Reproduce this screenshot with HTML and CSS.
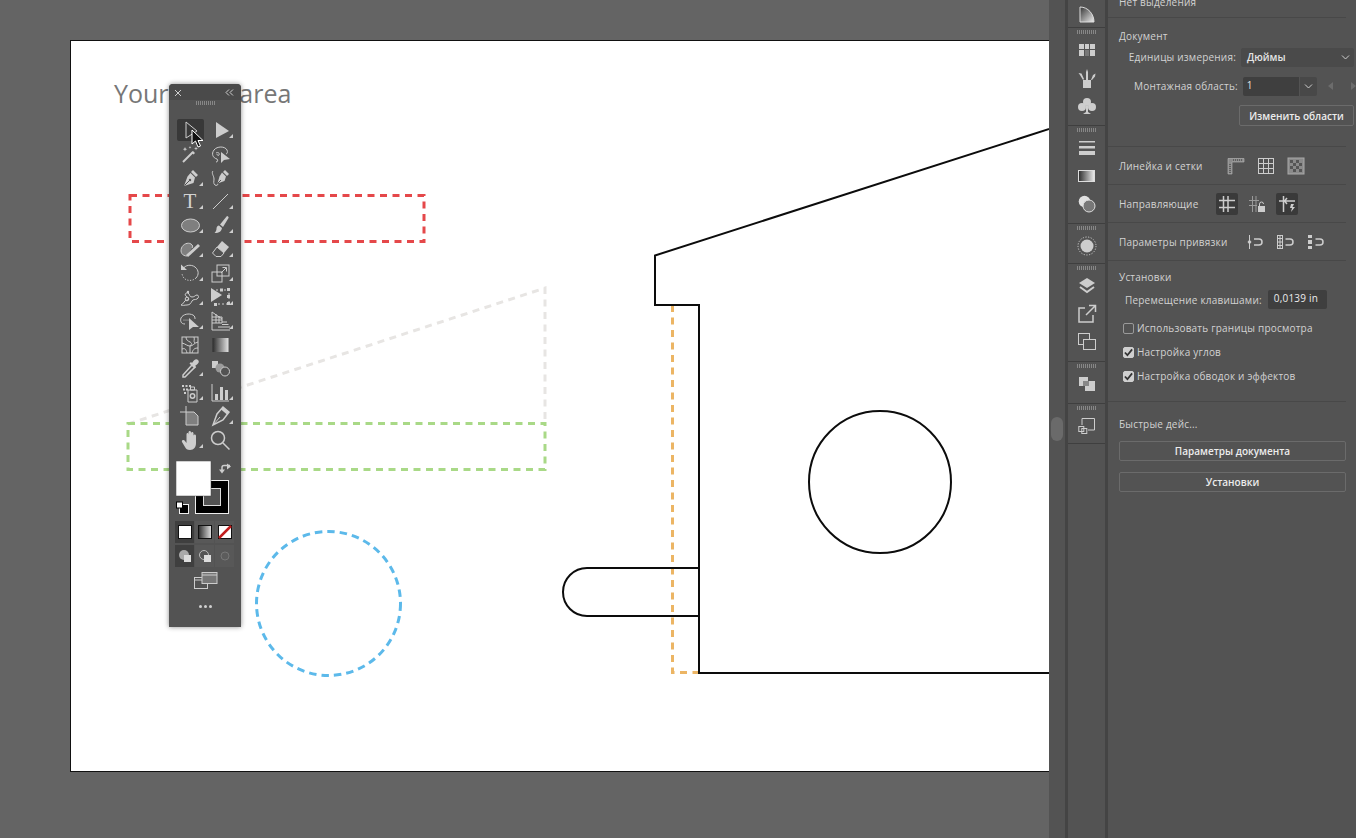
FILE: index.html
```html
<!DOCTYPE html>
<html lang="ru">
<head>
<meta charset="utf-8">
<title>Документ</title>
<link rel="stylesheet" href="styles.css">
</head>
<body>
<div class="app">
  <main class="canvas">
    <svg class="stage" viewBox="0 0 1049 838" width="1049" height="838">
      <rect class="artboard" x="70.5" y="40.5" width="1000" height="731"/>
      <text class="ab-title" x="114" y="103">Your work area</text>
      <rect class="d d-red" x="130" y="195.500" width="294" height="46"/>
      <path class="d d-grey" d="M128 424 L545 288 V424"/>
      <rect class="d d-green" x="128" y="423.500" width="417" height="46"/>
      <circle class="d d-blue" cx="328.500" cy="603.500" r="72"/>
      <path class="d d-orange" d="M672.500 305 V672.500 H698"/>
      <path class="ink" d="M1060 125.500 L655 255.500 V305 H699 V673 H1060"/>
      <circle class="ink" cx="880" cy="482" r="71"/>
      <path class="ink" d="M699 568 H587 A24 24 0 0 0 587 616 H699"/>
    </svg>

    <aside class="toolbar">
      <div class="tb-head">
        <svg width="8" height="8" viewBox="0 0 8 8"><path class="s" d="M1 1 7 7M7 1 1 7"/></svg>
        <svg width="9" height="7" viewBox="0 0 9 7"><path class="s" d="M4 .5 1 3.500 4 6.500M8 .5 5 3.500 8 6.500"/></svg>
      </div>
      <div class="grip tb-grip"></div>
      <div class="tools">
        <div class="tool active"><svg viewBox="0 0 24 24"><path class="s" d="M8 4 V20 L19 13 Z"/></svg></div>
        <div class="tool more"><svg viewBox="0 0 24 24"><path class="f" d="M8 4 V20 L21 13 Z"/></svg></div>
        <div class="tool"><svg viewBox="0 0 24 24"><path class="s w2" d="M5 20 15 10"/><path class="f" d="M15 9l2 2-1.500 1.500-2-2zM7 5l.6 1.600 1.600.6-1.600.6L7 9.400l-.6-1.600L4.800 7.200l1.600-.6zM18 4.500l.5 1.500 1.500.5-1.500.5-.5 1.500-.5-1.500-1.500-.5 1.500-.5zM12 4l.4 1 1 .4-1 .4-.4 1-.4-1-1-.4 1-.4z"/></svg></div>
        <div class="tool"><svg viewBox="0 0 24 24"><path class="s" d="M9 17C5 16 3 12 6 8c3-4 11-4 13 0 1 2 0 4-1 4"/><path class="s" d="M8 11c2-1 4 0 3 2-1 1-2 0-2-1M9 17c1 1 1 3-1 3"/><path class="f" d="M13 10 V21 L16 18 L22 17 Z"/></svg></div>
        <div class="tool more"><svg viewBox="0 0 24 24"><path class="f" d="M15 4l5 5-2 2-5-5zM12.500 7l4.500 4.500-1.500 5.500L6 20l3.500-9.500z"/><path class="cut" d="M6.500 19.500l5-5"/><circle class="cutf" cx="12" cy="14" r="1.200"/></svg></div>
        <div class="tool"><svg viewBox="0 0 24 24"><path class="f" d="M17 4l4 4-2 2-4-4zM14 6.500l4 4-1.500 4.500-7 2.500 2-7z"/><path class="cut" d="M10 17l3-3"/><path class="s" d="M5 5c-2 2 1 5 1 8s-1 4 1 6c1 1 3 0 3-1"/></svg></div>
        <div class="tool more"><span class="type-t">T</span></div>
        <div class="tool more"><svg viewBox="0 0 24 24"><path class="s" d="M5 20 20 5"/></svg></div>
        <div class="tool more"><svg viewBox="0 0 24 24"><ellipse class="sf" cx="12.500" cy="12.500" rx="9" ry="6.500"/></svg></div>
        <div class="tool more"><svg viewBox="0 0 24 24"><path class="f" d="M19 3c1 0 2 1 1.500 2L15 14l-3-2.500zM11 12.500l3 2.500c-.5 3-2.500 5-7.500 5 1.500-1.500 2-3 2-4.500 0-1.500 1-3 2.500-3z"/></svg></div>
        <div class="tool more"><svg viewBox="0 0 24 24"><path class="sf" d="M9 19C4 19 2 15 3.500 11 5 7 10 5 13 7c2 1.200 2 3 1 4"/><path class="s w3" d="M9 19 21 8"/></svg></div>
        <div class="tool more"><svg viewBox="0 0 24 24"><path class="f" d="M14 4l7 6-5 6-7-6z"/><path class="s" d="M9 10l7 6-3 3.500H8L4.500 16z"/></svg></div>
        <div class="tool more"><svg viewBox="0 0 24 24"><path class="s" d="M5 8C7 4 13 3 17 6c4 3 4 8 1 11"/><path class="f" d="M3 3.500 9 9H3z"/><path class="s dots" d="M18 17c-3 3-8 3-11 1-2-1.500-3-4-3-6"/></svg></div>
        <div class="tool more"><svg viewBox="0 0 24 24"><rect class="s" x="4" y="11" width="10" height="10"/><rect class="s" x="9" y="4" width="12" height="11"/><path class="s" d="M13 12l5-5M14.500 6.500H18.500V10.500"/></svg></div>
        <div class="tool more"><svg viewBox="0 0 24 24"><path class="s" d="M3 20c3-1 3-5 6-5s1-3-1-4 0-4 2-3 1 4 4 4 3-2 5-2 2 3 0 4-4 0-5 2-2 4-5 4-4 1-6 0"/><circle class="f" cx="10" cy="7" r="1.200"/><circle class="s" cx="9" cy="14" r="1.800"/></svg></div>
        <div class="tool more"><svg viewBox="0 0 24 24"><path class="f" d="M3 3 V17 L14 10 Z"/><path class="s dash" d="M8 5H21V19H7"/><path class="f" d="M6 18h3v3H6zM19 3h3v3h-3zM19 17h3v3h-3zM19 10h3v3h-3zM12 3.500h3v3h-3z"/></svg></div>
        <div class="tool more"><svg viewBox="0 0 24 24"><path class="s" d="M7 15C3 15 2 12 3 9c2-4 8-5 12-3 2 1 2 3 2 4"/><path class="f" d="M11 9V21L15 18H21Z"/><circle class="f" cx="6" cy="11" r=".6"/><circle class="f" cx="8" cy="11" r=".6"/><circle class="f" cx="10" cy="11" r=".6"/></svg></div>
        <div class="tool more"><svg viewBox="0 0 24 24"><path class="s" d="M4 3V21H22M4 3 14 10M4 8h10v6H4M8 5v9M11 7v7M4 11h10M14 13h5M14 15.500h6.500M10 18h12"/></svg></div>
        <div class="tool"><svg viewBox="0 0 24 24"><rect class="s" x="4" y="4" width="16" height="16"/><path class="s" d="M4 10c4 1 5 3 8 3s4-3 8-4M12 13v7M8 4c0 3 2 4 4 5s2 2 0 4M16 4c1 3-1 4 1 6M4 16c3-1 4 0 5 4M20 15c-3 0-5 1-6 5"/></svg></div>
        <div class="tool"><svg viewBox="0 0 24 24"><defs><linearGradient id="gr"><stop offset="0" stop-color="#2c2c2c"/><stop offset="1" stop-color="#e2e2e2"/></linearGradient></defs><rect x="4.500" y="5" width="16" height="14" fill="url(#gr)"/></svg></div>
        <div class="tool more"><svg viewBox="0 0 24 24"><path class="s w15" d="M14 9 5 19v2h2l10-10z"/><path class="f" d="M14 7c2-3 4-5 6-3s0 4-3 6l1 1-1.500 1.500-5-5L13 6z"/></svg></div>
        <div class="tool"><svg viewBox="0 0 24 24"><path class="f" d="M4 5h6v7H4z"/><circle fill="#9b9b9b" cx="12" cy="12" r="4.500"/><circle class="s sbg" cx="17" cy="15.500" r="4.500"/></svg></div>
        <div class="tool more"><svg viewBox="0 0 24 24"><path class="s" d="M10 10h9v12h-9zM12.500 7h4v3h-4z"/><circle class="s w15" cx="14.500" cy="16" r="2.200"/><path class="f" d="M4 5h2v2H4zM7.500 5h2v2h-2zM11 5h2v2h-2zM5 8.500h2v2H5zM8 8.500h2v2H8zM6 12h2v2H6z"/></svg></div>
        <div class="tool more"><svg viewBox="0 0 24 24"><path class="s" d="M4 4V21H21"/><path class="f" d="M7 14h3v6H7zM12 7h3v13h-3zM17 10h3v10h-3z"/></svg></div>
        <div class="tool"><svg viewBox="0 0 24 24"><path class="s" d="M8 2v6M2 8h6"/><path class="sf" d="M8 8h8l4 4v9H8z"/></svg></div>
        <div class="tool more"><svg viewBox="0 0 24 24"><path class="s w15" d="M5 21 9 10l6-7 6 5-6 8z"/><path class="f" d="M15 3l6 5-2 2.500-6-5z"/><path class="s" d="M5 21 12 13"/></svg></div>
        <div class="tool more"><svg viewBox="0 0 24 24"><path class="f" d="M5.500 12c1 0 2 1.500 3 3V6.500c0-2 2-2 2 0V11V4.500c0-2 2.500-2 2.500 0V11V5.500c0-2 2.500-2 2.500 0V12V8c0-2 2.500-2 2.500 0v7c0 4-2 7-6 7-3 0-4-1-5-3l-3-5c-.6-1.500.5-2 1.500-2z"/></svg></div>
        <div class="tool"><svg viewBox="0 0 24 24"><circle class="s w15" cx="10" cy="10" r="6.500"/><path class="s w15" d="M15 15l6.500 6.500"/></svg></div>
      </div>

      <div class="fillstroke">
        <svg width="60" height="60" viewBox="0 0 60 60">
          <rect x="19.500" y="19.500" width="33" height="33" fill="#000" stroke="#eee"/>
          <rect x="27.500" y="27.500" width="17" height="17" fill="#535353" stroke="#ddd"/>
          <rect x="0" y="0" width="35" height="35" fill="#fff" stroke="#444" stroke-width=".5"/>
          <path class="s w15" d="M46 11V6.500a2 2 0 0 1 2-2h6"/>
          <path class="f" d="M51 1.500l4 3-4 3zM43 7.500h6l-3 4z" transform="translate(0 1)"/>
          <rect x="3.500" y="43.500" width="9" height="9" fill="#000" stroke="#eee"/>
          <rect x=".5" y="41" width="6" height="6" fill="#fff" stroke="#000"/>
        </svg>
      </div>
      <div class="modes">
        <div class="mode active"><svg width="14" height="14" viewBox="0 0 14 14"><rect x=".5" y=".5" width="13" height="13" fill="#fff" stroke="#111"/></svg></div>
        <div class="mode"><svg width="14" height="14" viewBox="0 0 14 14"><rect x=".5" y=".5" width="13" height="13" fill="url(#gr)" stroke="#111"/></svg></div>
        <div class="mode"><svg width="14" height="14" viewBox="0 0 14 14"><rect x=".5" y=".5" width="13" height="13" fill="#fff" stroke="#111"/><path d="M1 13 13 1" stroke="#c21d1d" stroke-width="2.500"/></svg></div>
      </div>
      <div class="modes">
        <div class="mode active"><svg width="14" height="14" viewBox="0 0 14 14"><circle cx="6" cy="6" r="5" fill="#aaa"/><rect x="6" y="6" width="7" height="7" fill="#ddd"/></svg></div>
        <div class="mode"><svg width="14" height="14" viewBox="0 0 14 14"><circle cx="6" cy="6" r="4.500" fill="#555" stroke="#bbb"/><rect x="6" y="6" width="7" height="7" fill="#ddd"/></svg></div>
        <div class="mode"><svg width="14" height="14" viewBox="0 0 14 14"><circle cx="7" cy="7" r="4" fill="#5c5c5c" stroke="#777"/></svg></div>
      </div>
      <div class="screen"><svg width="24" height="17" viewBox="0 0 24 17"><rect class="s" x=".5" y="5.500" width="13" height="11"/><rect x="8" y=".5" width="15" height="11" fill="#777" stroke="#ccc"/><path class="s" d="M8 3H23M1 8H8"/></svg></div>
      <div class="dots"><span></span><span></span><span></span></div>
    </aside>
    <svg class="cursor" width="14" height="20" viewBox="0 0 14 20"><path d="M1 1V15L4.500 12 7 18l2.500-1L7 11.500h5z" fill="#111" stroke="#fff"/></svg>
  </main>

  <div class="gutter"><div class="handle"></div></div>

  <nav class="dock">
    <section class="dock-sec first">
      <div class="dock-i"><svg width="18" height="18" viewBox="0 0 18 18"><defs><linearGradient id="gd" x1="0" y1="0" x2="1" y2="1"><stop offset="0" stop-color="#333"/><stop offset="1" stop-color="#eee"/></linearGradient></defs><path d="M2 1c8 0 14 7 14 15H2z" fill="url(#gd)" stroke="#ddd"/></svg></div>
    </section>
    <section class="dock-sec pb5">
      <div class="grip"></div>
      <div class="dock-i"><svg width="18" height="14" viewBox="0 0 18 14"><path class="f" d="M1 1h5v5H1zM7 1h4v5H7zM12 1h5v5h-5zM1 7h5v6H1zM12 7h5v6h-5z"/><rect x="7" y="7" width="4" height="6" fill="#777"/></svg></div>
      <div class="dock-i"><svg width="18" height="20" viewBox="0 0 18 20"><path class="f" d="M5 12h8v8H5zM8 12V4l1-3 1 3v8zM5 12 2 7 .5 5l3 .5L6 11zM13 12l2-5 2.500-1.500-.5 3L14 12z"/></svg></div>
      <div class="dock-i"><svg width="18" height="18" viewBox="0 0 18 18"><circle class="f" cx="9" cy="5" r="4"/><circle class="f" cx="4" cy="10" r="4"/><circle class="f" cx="14" cy="10" r="4"/><path class="f" d="M8 9h2v6l3 2H5l3-2z"/></svg></div>
    </section>
    <section class="dock-sec pb5">
      <div class="grip"></div>
      <div class="dock-i"><svg width="18" height="14" viewBox="0 0 18 14"><path class="f" d="M1 0h16v1.500H1zM1 5h16v2.500H1zM1 10h16v4H1z"/></svg></div>
      <div class="dock-i"><svg width="18" height="14" viewBox="0 0 18 14"><defs><linearGradient id="gh"><stop offset="0" stop-color="#2c2c2c"/><stop offset="1" stop-color="#eee"/></linearGradient></defs><rect x=".5" y="1.500" width="16" height="11" fill="url(#gh)" stroke="#ddd"/></svg></div>
      <div class="dock-i"><svg width="18" height="18" viewBox="0 0 18 18"><circle cx="6.500" cy="6.500" r="5.800" fill="#e0e0e0"/><circle cx="11" cy="11" r="6" fill="#777" stroke="#ddd"/></svg></div>
    </section>
    <section class="dock-sec">
      <div class="grip"></div>
      <div class="dock-i"><svg width="20" height="20" viewBox="0 0 20 20"><circle class="f" cx="10" cy="10" r="6.500"/><circle class="s dots" cx="10" cy="10" r="9"/></svg></div>
    </section>
    <section class="dock-sec pb5">
      <div class="grip"></div>
      <div class="dock-i"><svg width="18" height="18" viewBox="0 0 18 18"><path class="f" d="M9 1l8 5-8 5-8-5z"/><path class="s w2" d="M2 10l7 5 7-5"/></svg></div>
      <div class="dock-i"><svg width="20" height="20" viewBox="0 0 20 20"><path class="s w15" d="M8 4H2V18H16V11"/><path class="s w15" d="M9 11 18 2M12 1.500H18.500V8"/></svg></div>
      <div class="dock-i"><svg width="20" height="20" viewBox="0 0 20 20"><rect class="s" x="1.500" y="1.500" width="11" height="11"/><rect class="s sbg" x="6.500" y="7.500" width="12" height="10"/></svg></div>
    </section>
    <section class="dock-sec pb5">
      <div class="grip"></div>
      <div class="dock-i"><svg width="16" height="16" viewBox="0 0 16 16"><path class="f" d="M0 1h9v4H4v5H0z"/><rect x="4" y="5" width="6" height="5" fill="#888"/><path class="f" d="M10 5h6v10H6v-5h4z"/></svg></div>
    </section>
    <section class="dock-sec">
      <div class="grip"></div>
      <div class="dock-i"><svg width="18" height="18" viewBox="0 0 18 18"><path class="s" d="M4 8V1.500H16.500V13H10"/><rect class="s" x=".8" y="9.500" width="5" height="5"/><rect class="s" x="3.800" y="11.500" width="5" height="5"/></svg></div>
    </section>
  </nav>

  <div class="panel">
    <section class="sec sec-top"><h2 class="label">Нет выделения</h2></section>

    <section class="sec sec-doc">
      <h2 class="label">Документ</h2>
      <div class="row row-units">
        <span class="label">Единицы измерения:</span>
        <div class="select"><strong>Дюймы</strong><svg class="chev" width="9" height="5" viewBox="0 0 9 5"><path class="s" d="M1 .5 4.500 4 8 .5"/></svg></div>
      </div>
      <div class="row row-board">
        <span class="label">Монтажная область:</span>
        <div class="combo"><span class="combo-v">1</span><span class="combo-b"><svg class="chev" width="9" height="5" viewBox="0 0 9 5"><path class="s" d="M1 .5 4.500 4 8 .5"/></svg></span></div>
        <svg class="pager" width="30" height="8" viewBox="0 0 30 8"><path d="M6 0V8L1 4zM24 0V8L29 4z" fill="#6c6c6c"/></svg>
      </div>
      <button class="btn btn-edit">Изменить области</button>
    </section>

    <section class="sec sec-line">
      <h2 class="label">Линейка и сетки</h2>
      <div class="icons icons-a">
        <svg width="18" height="18" viewBox="0 0 18 18"><path d="M1 1.500H17V5H5V17H1z" fill="#8b8b8b" stroke="#bbb" stroke-width=".6"/><path d="M6 3h10M3 7v9" stroke="#333" stroke-dasharray="1 1"/></svg>
        <svg width="18" height="18" viewBox="0 0 18 18"><rect class="s" x="1.500" y="1.500" width="15" height="15"/><path class="s" d="M6.500 1.500V16.500M11.500 1.500V16.500M1.500 6.500H16.500M1.500 11.500H16.500"/></svg>
        <svg width="18" height="18" viewBox="0 0 18 18"><rect x="1" y="1" width="16" height="16" fill="#8a8a8a" stroke="#aaa"/><path d="M3 3h3v3H3zM9 3h3v3H9zM6 6h3v3H6zM12 6h3v3h-3zM3 9h3v3H3zM9 9h3v3H9zM6 12h3v3H6zM12 12h3v3h-3z" fill="#555"/></svg>
      </div>
    </section>

    <section class="sec sec-line">
      <h2 class="label">Направляющие</h2>
      <div class="icons icons-b">
        <div class="ib on"><svg width="18" height="18" viewBox="0 0 18 18"><path class="s w15" d="M1 5.500H17M1 12.500H17M5.500 1V17M10 1V17"/></svg></div>
        <div class="ib"><svg width="18" height="18" viewBox="0 0 18 18"><path class="s dim" d="M1 5.500H11M1 10.500H9M4.500 1V17M8 1V17"/><path class="f" d="M10 11h7v6h-7z"/><path class="s" d="M11.500 11V9a2 2 0 0 1 4 0"/></svg></div>
        <div class="ib on"><svg width="18" height="18" viewBox="0 0 18 18"><path class="s w15" d="M5.500 1V17M1 6H5M7 6H17M9 3 6.500 6 9 9"/><path class="f" d="M13 9h3l-1.500 3H17l-4 5 1-4h-2z"/></svg></div>
      </div>
    </section>

    <section class="sec sec-line">
      <h2 class="label">Параметры привязки</h2>
      <div class="icons icons-c">
        <svg width="18" height="14" viewBox="0 0 18 14"><path class="s" d="M3.500 0V14"/><path class="f" d="M3.500 4.500 5.500 7 3.500 9.500 1.500 7z"/><path class="s w15" d="M8 4H13a3 3 0 0 1 0 6H8"/></svg>
        <svg width="18" height="14" viewBox="0 0 18 14"><rect class="s" x="1.500" y=".5" width="5" height="13"/><path class="s" d="M1.500 3.500h5M1.500 7h5M1.500 10.500h5M4 .5v13"/><path class="s w15" d="M9.500 4H14a3 3 0 0 1 0 6H9.500"/></svg>
        <svg width="18" height="14" viewBox="0 0 18 14"><path class="f" d="M2 0h4v3H2zM2 5h4v4H2zM2 11h4v3H2z"/><path class="s w15" d="M9.500 4H14a3 3 0 0 1 0 6H9.500"/></svg>
      </div>
    </section>

    <section class="sec sec-set">
      <h2 class="label">Установки</h2>
      <div class="row row-nudge">
        <span class="label">Перемещение клавишами:</span>
        <span class="field">0,0139 in</span>
      </div>
      <label class="check"><span class="box"></span><span class="label">Использовать границы просмотра</span></label>
      <label class="check"><span class="box on"><svg width="10" height="9" viewBox="0 0 10 9"><path d="M1 4.500 3.800 7.500 9 1" fill="none" stroke="#333" stroke-width="2"/></svg></span><span class="label">Настройка углов</span></label>
      <label class="check"><span class="box on"><svg width="10" height="9" viewBox="0 0 10 9"><path d="M1 4.500 3.800 7.500 9 1" fill="none" stroke="#333" stroke-width="2"/></svg></span><span class="label">Настройка обводок и эффектов</span></label>
    </section>

    <section class="sec sec-quick">
      <h2 class="label">Быстрые дейс...</h2>
      <button class="btn btn-wide">Параметры документа</button>
      <button class="btn btn-wide">Установки</button>
    </section>
  </div>
</div>
</body>
</html>
```
FILE: styles.css
```css
* { box-sizing: border-box; }
html, body { margin: 0; height: 100%; overflow: hidden; }
body { background: #535353; font-family: "Open Sans", "Noto Sans", sans-serif; font-size: 10px; color: #d6d6d6; }
svg { display: block; }

.app { display: flex; width: 1356px; height: 838px; overflow: hidden; }

/* generic svg paint */
.s { fill: none; stroke: #cdcdcd; stroke-width: 1; }
.f { fill: #cdcdcd; }
.sf { fill: #7f7f7f; stroke: #cdcdcd; stroke-width: 1; }
.sbg { fill: #535353; }
.w15 { stroke-width: 1.500; }
.w2 { stroke-width: 2; }
.w3 { stroke-width: 3; }
.dash { stroke-dasharray: 2 2; }
.s.dots { stroke-dasharray: 1.200 1.500; }
.dim { stroke: #9a9a9a; }
.cut { fill: none; stroke: #535353; stroke-width: 1; }
.cutf { fill: #535353; }

/* canvas */
.canvas { position: relative; width: 1049px; flex: none; height: 838px; background: #646464; overflow: hidden; }
.stage { position: absolute; left: 0; top: 0; }
.artboard { fill: #fff; stroke: #111; stroke-width: 1; }
.ab-title { font-family: "Open Sans", sans-serif; font-size: 25px; fill: #777; }
.d { fill: none; stroke-width: 3; stroke-dasharray: 7 5.500; }
.d-red { stroke: #e5484a; }
.d-grey { stroke: #e7e5e3; }
.d-green { stroke: #a9d987; }
.d-blue { stroke: #5cb9ea; stroke-dasharray: 7.500 5; }
.d-orange { stroke: #ecb564; }
.ink { fill: none; stroke: #0c0c0c; stroke-width: 2; }

/* floating tools */
.toolbar { position: absolute; left: 169px; top: 84px; width: 72px; height: 543px; background: #535353; border-radius: 4px 4px 0 0; box-shadow: 0 0 5px rgba(0,0,0,.45); }
.tb-head { display: flex; justify-content: space-between; align-items: center; height: 16px; padding: 1px 7px 0 5px; background: #4a4a4a; border-radius: 4px 4px 0 0; }
.grip { height: 4px; width: 19px; background: repeating-linear-gradient(90deg, #878787 0 1px, transparent 1px 2px); }
.tb-grip { margin: 1px 0 0 27px; }
.tools { display: grid; grid-template-columns: 30px 30px; grid-auto-rows: 23.850px; margin: 13px 0 0 6px; }
.tool { position: relative; display: flex; align-items: center; justify-content: center; }
.tool svg { width: 24px; height: 24px; }
.tool.active::before { content: ""; position: absolute; left: 2px; top: 1px; width: 27px; height: 22px; background: #383838; border-radius: 2px; }
.tool.active svg { position: relative; }
.tool.more::after { content: ""; position: absolute; right: 2px; bottom: 4px; border: 2px solid transparent; border-right-color: #cdcdcd; border-bottom-color: #cdcdcd; }
.type-t { font-family: "Liberation Serif", serif; font-size: 21px; line-height: 24px; color: #d2d2d2; }
.fillstroke { margin: 9px 0 0 7px; height: 60px; }
.modes { display: flex; gap: 1px; margin: 0 0 2px 6px; width: 60px; }
.fillstroke + .modes { margin-top: 0; }
.mode { display: flex; align-items: center; justify-content: center; width: 19px; height: 22px; background: #585858; }
.mode.active { background: #3f3f3f; }
.modes + .modes { margin-top: 2px; }
.screen { display: flex; justify-content: center; margin: 5px 0 0 1px; }
.dots { display: flex; justify-content: center; gap: 2px; margin: 16px 0 0 0; }
div.dots span { width: 3px; height: 3px; border-radius: 50%; background: #d0d0d0; }
.cursor { position: absolute; left: 191px; top: 129px; }

/* gutter + dock */
.gutter { position: relative; width: 16px; flex: none; background: #535353; }
.handle { position: absolute; left: 2px; top: 417px; width: 12px; height: 24px; border-radius: 6px; background: #6a6a6a; }
.dock { width: 43px; flex: none; background: #535353; border-left: 3px solid #444; border-right: 3px solid #444; }
.dock-sec { padding: 8px 0 3px; border-bottom: 1px solid #3f3f3f; position: relative; }
.dock-sec.pb5 { padding-bottom: 5px; }
.dock-sec.first { height: 28px; padding: 0; display: flex; align-items: flex-end; justify-content: center; overflow: hidden; }
.dock-sec .grip { position: absolute; left: 9px; top: 0; margin-top: 2px; }
.dock-i { height: 28px; display: flex; align-items: center; justify-content: center; }
.dock-sec.first .dock-i { margin-bottom: 3px; height: 18px; }

/* panel */
.panel { flex: 1; min-width: 0; background: #535353; overflow: hidden; }
.label { margin: 0; font-size: 10px; font-weight: 400; color: #d2d2d2; line-height: 14px; letter-spacing: .2px; white-space: nowrap; }
.sec { width: 238px; border-bottom: 1px solid #484848; padding-left: 11px; }
.sec-top { height: 18px; padding-top: 0; display: flex; align-items: flex-end; padding-bottom: 8px; overflow: visible; }
.sec-doc { height: 129px; padding-top: 11px; position: relative; }
.row { display: flex; align-items: center; }
.row-units { margin-top: 4px; justify-content: flex-end; width: 235px; margin-left: 0; gap: 5px; height: 20px; }
.row-board { margin-top: 9px; justify-content: flex-start; gap: 5px; height: 20px; padding-left: 15px; width: 250px; }
.select { width: 113px; height: 19px; flex: none; background: #4a4a4a; border-radius: 2px; display: flex; align-items: center; justify-content: space-between; padding: 0 4px 0 6px; }
.select strong { font-weight: 600; font-size: 10px; color: #e4e4e4; }
.combo { display: flex; width: 74px; height: 19px; flex: none; }
.combo-v { flex: 1; background: #3f3f3f; color: #e4e4e4; padding-left: 4px; line-height: 16px; font-size: 10px; border-radius: 2px 0 0 2px; }
.combo-b { width: 17px; background: #484848; display: flex; align-items: center; justify-content: center; margin-left: 1px; border-radius: 0 2px 2px 0; }
.pager { margin-left: 5px; flex: none; }
.btn { display: block; font: 600 10px "Open Sans", "Noto Sans", sans-serif; color: #ececec; background: #535353; border: 1px solid #6b6b6b; border-radius: 2px; padding: 0; }
.btn-edit { width: 115px; height: 21px; margin: 9px 0 0 120px; }
.sec-line { height: 38px; display: flex; align-items: center; position: relative; }
.sec-line:last-of-type { height: 39px; }
.icons { display: flex; align-items: center; position: absolute; top: 0; bottom: 0; }
.icons-a { left: 119px; gap: 12px; }
.icons-b { left: 108px; gap: 8px; }
.icons-c { left: 138px; gap: 12px; }
.ib { width: 22px; height: 22px; display: flex; align-items: center; justify-content: center; border-radius: 2px; }
.ib.on { background: #3a3a3a; }
.sec-set { height: 141px; padding-top: 9px; }
.row-nudge { margin: 6px 0 0 6px; gap: 6px; }
.field { width: 59px; height: 19px; background: #3f3f3f; color: #ececec; line-height: 17px; padding-left: 6px; font-size: 10px; letter-spacing: .2px; border-radius: 2px; flex: none; }
.check { display: flex; align-items: center; gap: 3px; height: 24px; margin-left: 4px; }
.row-nudge + .check { margin-top: 7px; }
.box { width: 11px; height: 11px; border: 1px solid #9a9a9a; border-radius: 2px; display: flex; align-items: center; justify-content: center; flex: none; }
.box.on { background: #cfcfcf; border-color: #cfcfcf; }
.sec-quick { border: 0; padding-top: 15px; }
.btn-wide { width: 227px; height: 20px; margin-top: 10px; }
.btn-wide:first-of-type { margin-top: 10px; }
.btn-wide + .btn-wide { margin-top: 11px; }
```
